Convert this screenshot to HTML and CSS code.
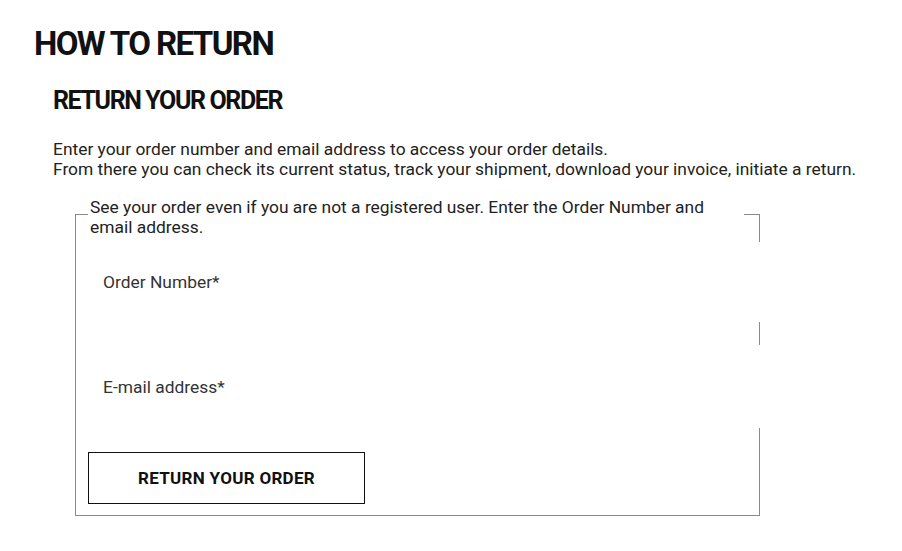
FILE: index.html
```html
<!DOCTYPE html>
<html lang="en">
<head>
<meta charset="utf-8">
<title>How to return</title>
<link rel="stylesheet" href="styles.css">
</head>
<body>
<main class="page">
  <h1 class="title">HOW TO RETURN</h1>
  <section class="section">
    <h2 class="subtitle">RETURN YOUR ORDER</h2>
    <p class="intro">Enter your order number and email address to access your order details.<br>From there you can check its current status, track your shipment, download your invoice, initiate a return.</p>
    <form class="form">
      <fieldset class="box">
        <legend class="legend">See your order even if you are not a registered user. Enter the Order Number and email address.</legend>
        <div class="field field-first">
          <label class="field-label" for="order">Order Number*</label>
          <input class="field-input" id="order" type="text">
        </div>
        <div class="field field-second">
          <label class="field-label" for="email">E-mail address*</label>
          <input class="field-input" id="email" type="email">
        </div>
        <button class="submit" type="button">RETURN YOUR ORDER</button>
      </fieldset>
    </form>
  </section>
</main>
</body>
</html>
```
FILE: styles.css
```css
html, body {
  margin: 0;
  padding: 0;
  background: #fff;
}
body {
  font-family: Roboto, "Liberation Sans", sans-serif;
  color: #222;
}
.page {
  padding: 26px 0 0 34px;
}
.title {
  margin: 0;
  font-size: 33px;
  line-height: 36px;
  font-weight: 700;
  color: #111;
  letter-spacing: -1.6px;
}
.section {
  padding-left: 19px;
  padding-top: 24px;
}
.subtitle {
  margin: 0;
  font-size: 25px;
  line-height: 30px;
  font-weight: 700;
  color: #111;
  letter-spacing: -1.4px;
}
.intro {
  margin: 23px 0 0 0;
  font-size: 17.4px;
  line-height: 20px;
  color: #222;
}
.form {
  margin: 12px 0 0 22px;
}
.box {
  margin: 0;
  width: 659px;
  border: 1px solid #8a8a8a;
  padding: 4px 12px 11px 12px;
}
.legend {
  padding: 6px 2px 0 2px;
  width: 652px;
  font-size: 17.4px;
  line-height: 20px;
  color: #222;
}
.field {
  position: relative;
  background: #fff;
  margin-right: -30px;
  display: flex;
  align-items: center;
}
.field-first {
  height: 80px;
  margin-top: 1px;
}
.field-second {
  height: 83px;
  margin-top: 23px;
}
.field-label {
  padding-left: 15px;
  font-size: 17.4px;
  line-height: 20px;
  color: #333;
}
.field-input {
  position: absolute;
  inset: 0;
  width: 100%;
  height: 100%;
  border: 0;
  background: transparent;
  outline: none;
}
.submit {
  display: block;
  margin-top: 24px;
  width: 277px;
  height: 52px;
  border: 1px solid #111;
  background: #fff;
  font-family: Roboto, "Liberation Sans", sans-serif;
  font-size: 17px;
  font-weight: 700;
  letter-spacing: 0.3px;
  color: #111;
}
```
